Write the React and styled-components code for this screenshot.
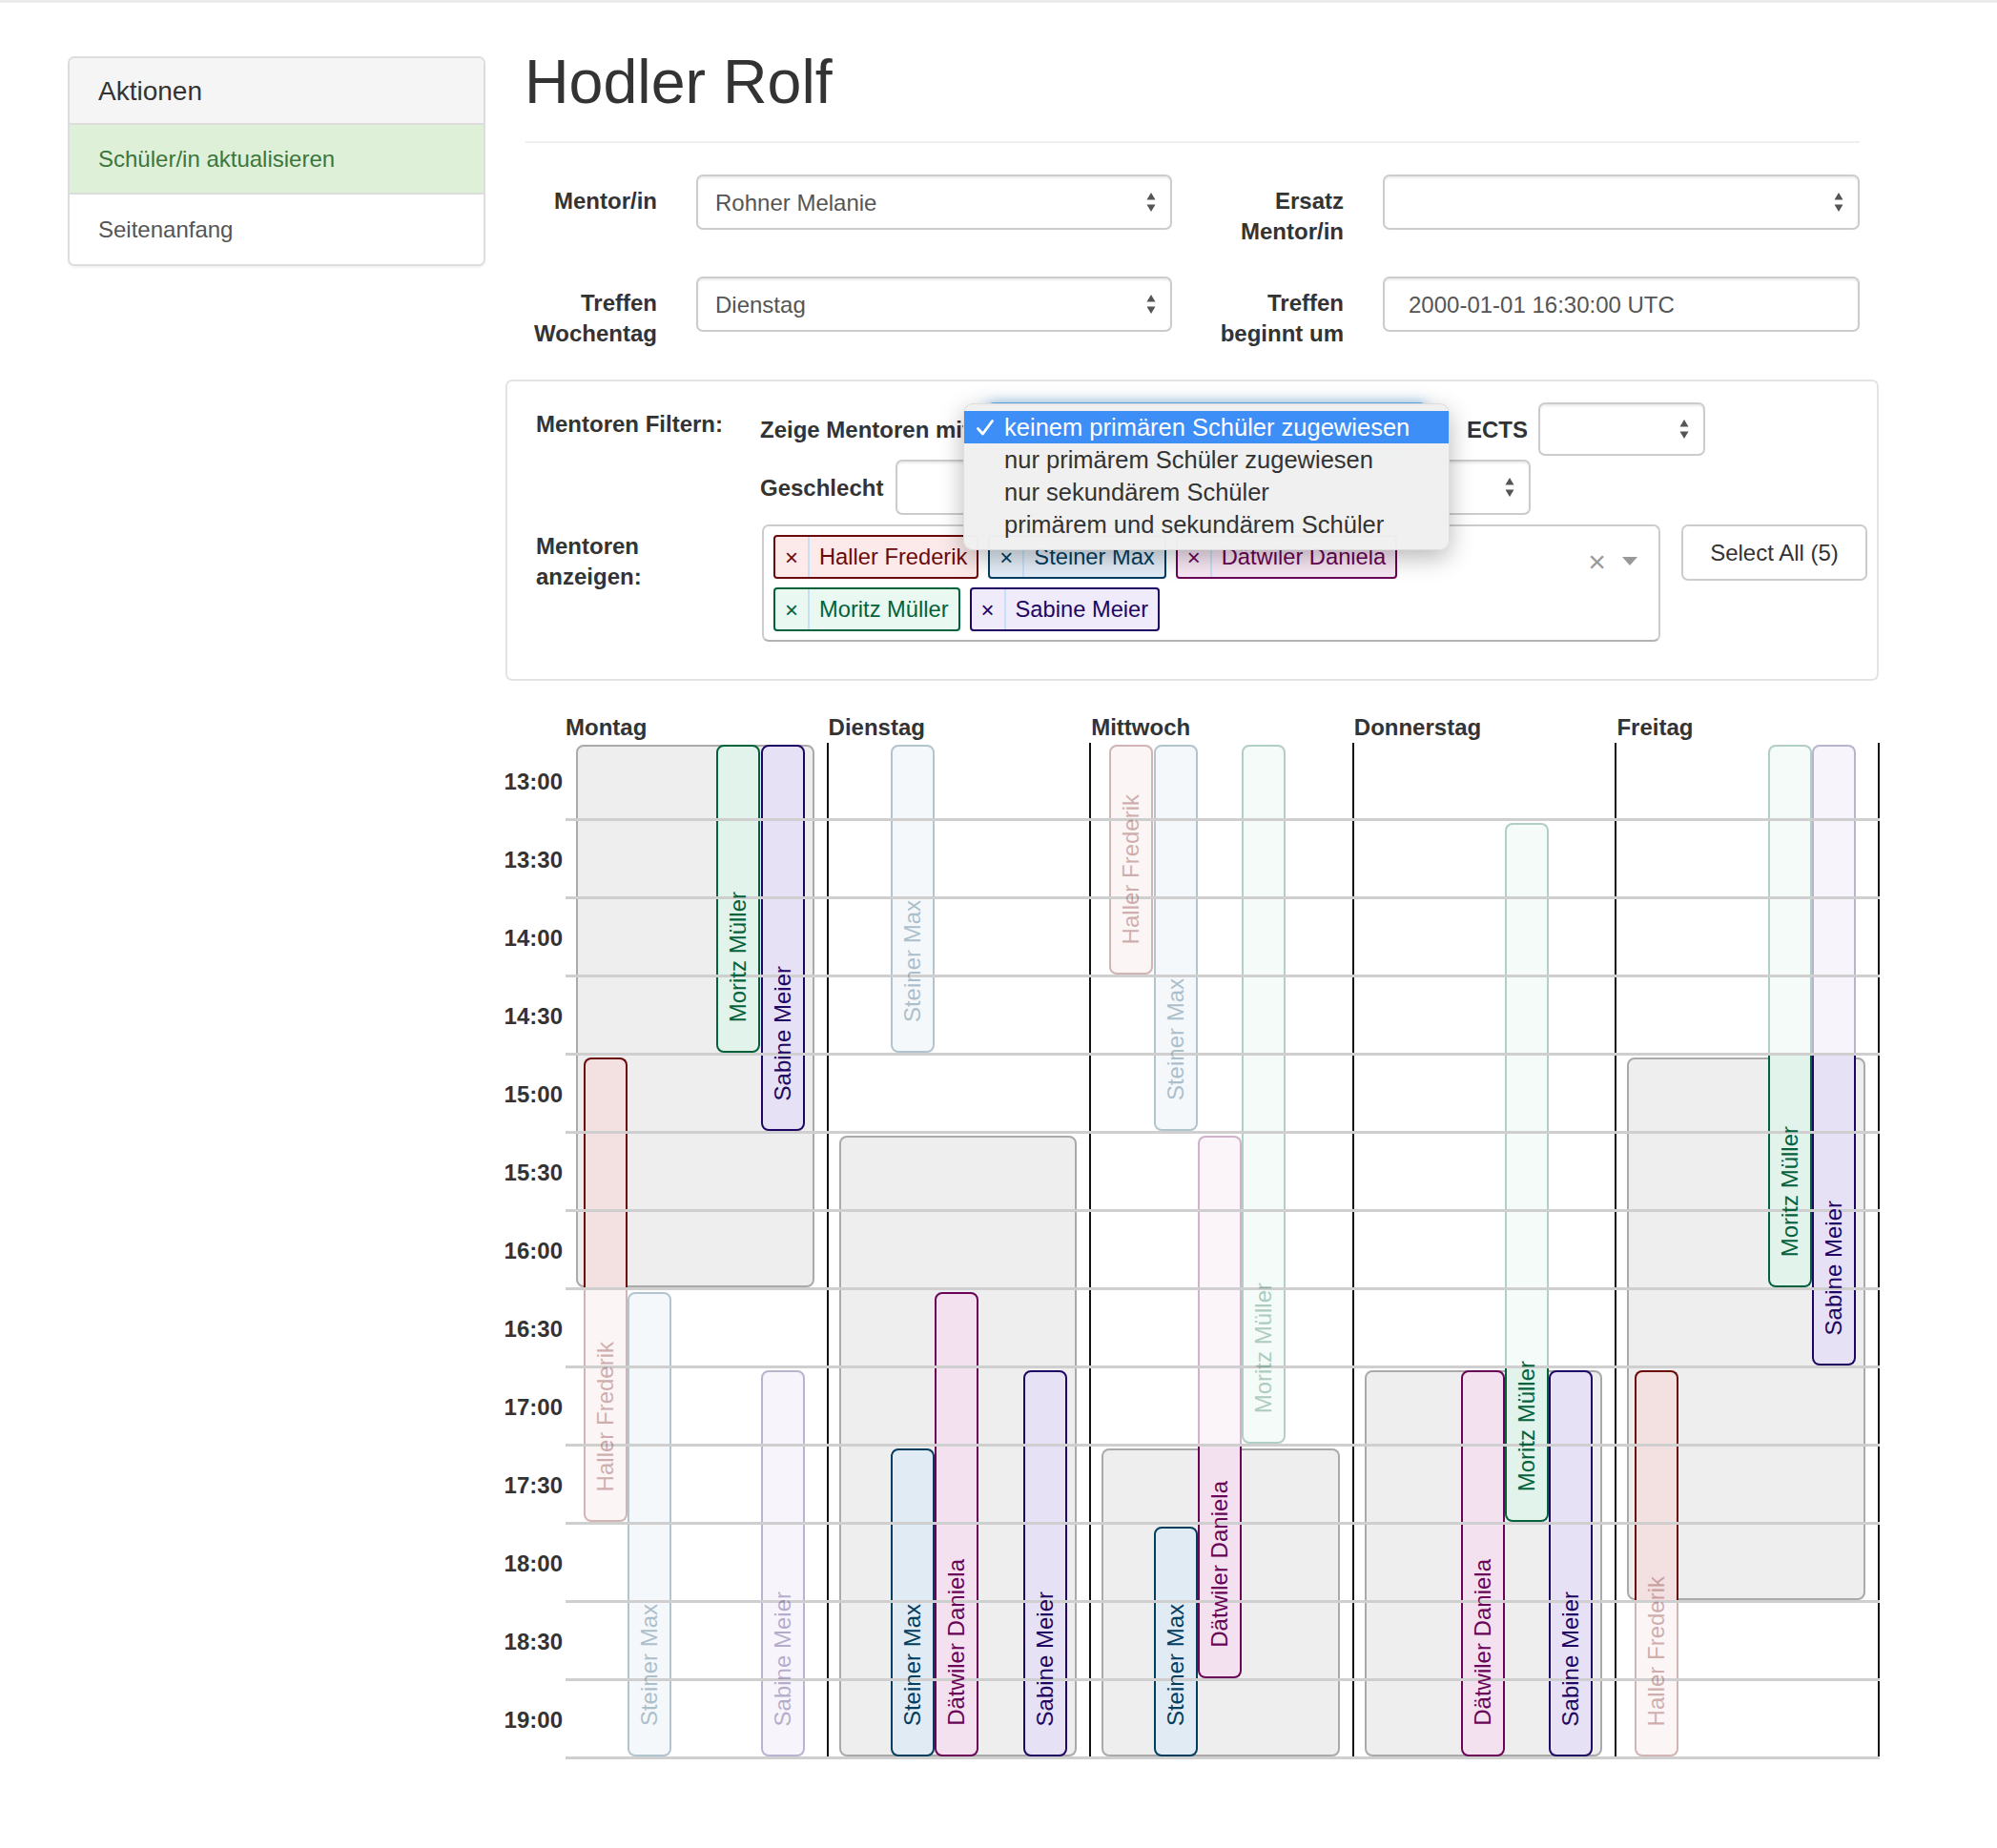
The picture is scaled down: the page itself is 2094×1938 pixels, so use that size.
import React from 'react';
import styled, { createGlobalStyle } from 'styled-components';

const GlobalStyle = createGlobalStyle`
  * { box-sizing: border-box; }
  html, body { margin: 0; padding: 0; background: #ffffff; }
  body {
    font-family: "Liberation Sans", Arial, Helvetica, sans-serif;
    font-size: 24px;
    line-height: 33px;
    color: #333333;
  }
`;

const ROW = 82;

const mentors = {
  H: { name: 'Haller Frederik', dark: '#6b0a0a', bg: '#f3e1e1', tag: '#fce9e9', slot: 0 },
  S: { name: 'Steiner Max', dark: '#033e5f', bg: '#e1ebf4', tag: '#e4eef8', slot: 1 },
  D: { name: 'Dätwiler Daniela', dark: '#6a0457', bg: '#f3e1ef', tag: '#f8e8f5', slot: 2 },
  M: { name: 'Moritz Müller', dark: '#03623b', bg: '#e1f3ea', tag: '#e9f8f0', slot: 3 },
  B: { name: 'Sabine Meier', dark: '#1e0662', bg: '#e6e1f4', tag: '#efebfb', slot: 4 },
};

const days = [
  { name: 'Montag', block: [0, 7], bars: [
    { m: 'H', segs: [[4, 7, 1], [7, 10, 0]] },
    { m: 'S', segs: [[7, 13, 0]] },
    { m: 'M', segs: [[0, 4, 1]] },
    { m: 'B', segs: [[0, 5, 1]] },
    { m: 'B', segs: [[8, 13, 0]] },
  ] },
  { name: 'Dienstag', block: [5, 13], bars: [
    { m: 'S', segs: [[0, 4, 0]] },
    { m: 'S', segs: [[9, 13, 1]] },
    { m: 'D', segs: [[7, 13, 1]] },
    { m: 'B', segs: [[8, 13, 1]] },
  ] },
  { name: 'Mittwoch', block: [9, 13], bars: [
    { m: 'H', segs: [[0, 3, 0]] },
    { m: 'S', segs: [[0, 5, 0]] },
    { m: 'D', segs: [[5, 9, 0], [9, 12, 1]] },
    { m: 'M', segs: [[0, 9, 0]] },
    { m: 'S', segs: [[10, 13, 1]] },
  ] },
  { name: 'Donnerstag', block: [8, 13], bars: [
    { m: 'M', segs: [[1, 8, 0], [8, 10, 1]] },
    { m: 'D', segs: [[8, 13, 1]] },
    { m: 'B', segs: [[8, 13, 1]] },
  ] },
  { name: 'Freitag', block: [4, 11], bars: [
    { m: 'H', segs: [[8, 11, 1], [11, 13, 0]] },
    { m: 'M', segs: [[0, 4, 0], [4, 7, 1]] },
    { m: 'B', segs: [[0, 4, 0], [4, 8, 1]] },
  ] },
];

const times = ['13:00', '13:30', '14:00', '14:30', '15:00', '15:30', '16:00', '16:30', '17:00', '17:30', '18:00', '18:30', '19:00'];

/* ---------- layout ---------- */
const TopRule = styled.div`
  height: 3px;
  background: #ececec;
`;

const Page = styled.div`
  display: flex;
  align-items: flex-start;
  padding: 0 0 90px 71px;
`;

/* ---------- sidebar ---------- */
const Sidebar = styled.nav`
  flex: 0 0 438px;
  margin-top: 56px;
  border: 2px solid #dddddd;
  border-radius: 7px;
  overflow: hidden;
  box-shadow: 0 2px 2px rgba(0, 0, 0, 0.05);
`;

const SideHeader = styled.div`
  height: 70px;
  display: flex;
  align-items: center;
  padding-left: 30px;
  background: #f5f5f5;
  border-bottom: 2px solid #dddddd;
  font-size: 28px;
  color: #333333;
`;

const SideItem = styled.a`
  display: flex;
  align-items: center;
  height: 73px;
  padding-left: 30px;
  text-decoration: none;
  background: ${p => (p.$active ? '#dff0d8' : '#ffffff')};
  color: ${p => (p.$active ? '#3c763d' : '#555555')};
  border-bottom: ${p => (p.$last ? 'none' : '2px solid #dddddd')};
`;

/* ---------- main ---------- */
const Main = styled.main`
  flex: 0 0 1441px;
  margin-left: 21px;
  margin-top: 48px;
`;

const Title = styled.h1`
  margin: 0 0 0 20px;
  font-size: 64.5px;
  line-height: 70px;
  font-weight: 500;
  color: #333333;
`;

const Rule = styled.hr`
  margin: 27px 21px 0;
  border: 0;
  height: 2px;
  background: #eeeeee;
`;

const FormGrid = styled.div`
  margin-top: 33px;
  padding: 0 21px;
  display: grid;
  grid-template-columns: 138px 499px 139px 500px;
  column-gap: 41px;
  row-gap: 31px;
  align-items: start;
`;

const FormLabel = styled.label`
  text-align: right;
  font-weight: bold;
  padding-top: 12px;
  line-height: 32px;
`;

const SelectBox = styled.div`
  position: relative;
  height: ${p => p.$h || 58}px;
  width: ${p => (p.$w ? `${p.$w}px` : 'auto')};
  flex: 0 0 auto;
  display: flex;
  align-items: center;
  justify-content: space-between;
  padding: 0 15px 0 ${p => p.$pl || 18}px;
  border: 2px solid ${p => (p.$focus ? '#66afe9' : '#cccccc')};
  border-radius: 7px;
  background: #ffffff;
  color: #555555;
  box-shadow: inset 0 2px 2px rgba(0, 0, 0, 0.075)
    ${p => (p.$focus ? ', 0 0 14px rgba(102, 175, 233, 0.7)' : '')};
`;

const Arrows = () => (
  <svg width="10" height="22" viewBox="0 0 10 22">
    <path d="M5 1 L9.5 8.5 L0.5 8.5 Z" fill="#555" />
    <path d="M0.5 13.5 L9.5 13.5 L5 21 Z" fill="#555" />
  </svg>
);

/* ---------- filter panel ---------- */
const FilterPanel = styled.section`
  margin-top: 32px;
  width: 1440px;
  border: 2px solid #e3e3e3;
  border-radius: 7px;
  padding: 22px 10px 39px 30px;
  display: grid;
  grid-template-columns: 235px 1fr;
  row-gap: 10px;
`;

const PanelLabel = styled.div`
  width: 205px;
  font-weight: bold;
  padding-top: 7px;
  line-height: 32px;
`;

const FilterRows = styled.div`
  display: flex;
  flex-direction: column;
  gap: 4px;
`;

const FilterRow = styled.div`
  display: flex;
  align-items: center;
  height: ${p => p.$h}px;
`;

const InlineLabel = styled.span`
  font-weight: bold;
  margin-right: ${p => p.$mr || 0}px;
  margin-left: ${p => p.$ml || 0}px;
  white-space: nowrap;
`;

const FocusWrap = styled.div`
  position: relative;
  width: 461px;
  height: 56px;
`;

const Dropdown = styled.ul`
  position: absolute;
  z-index: 20;
  top: 1px;
  left: -25px;
  width: 510px;
  margin: 0;
  padding: 7px 0 9px;
  list-style: none;
  background: rgba(240, 240, 240, 0.98);
  border: 1px solid rgba(0, 0, 0, 0.08);
  border-radius: 10px;
  box-shadow: 0 8px 26px rgba(0, 0, 0, 0.28);
  font-size: 25.5px;
`;

const Option = styled.li`
  position: relative;
  height: 34px;
  line-height: 34px;
  padding-left: 42px;
  white-space: nowrap;
  background: ${p => (p.$selected ? '#3d8ef7' : 'transparent')};
  color: ${p => (p.$selected ? '#ffffff' : '#333333')};
`;

const CheckMark = styled.svg`
  position: absolute;
  left: 13px;
  top: 9px;
`;

const ShowRow = styled.div`
  display: flex;
  align-items: flex-start;
  gap: 22px;
  padding-left: 2px;
`;

const MultiSelect = styled.div`
  width: 942px;
  height: 123px;
  display: flex;
  align-items: flex-start;
  justify-content: space-between;
  padding: 9px 0 0 10px;
  border: 2px solid #cccccc;
  border-bottom-color: #b3b3b3;
  border-radius: 7px;
  background: #ffffff;
`;

const TagArea = styled.div`
  width: 670px;
  display: flex;
  flex-wrap: wrap;
  gap: 9px 10px;
`;

const Tag = styled.div`
  display: flex;
  align-items: stretch;
  height: 46px;
  border: 2px solid ${p => p.$dark};
  border-radius: 4px;
  background: ${p => p.$bg};
  color: ${p => p.$dark};
`;

const TagRemove = styled.span`
  width: 36px;
  display: flex;
  align-items: center;
  justify-content: center;
  border-right: 2px solid #c6e0f7;
  font-size: 24px;
`;

const TagLabel = styled.span`
  display: flex;
  align-items: center;
  padding: 0 10px;
  font-size: 23.7px;
  white-space: nowrap;
`;

const Controls = styled.div`
  display: flex;
  align-items: center;
  gap: 17px;
  margin: 12px 22px 0 0;
  color: #999999;
`;

const ClearX = styled.span`
  font-size: 32px;
  line-height: 32px;
`;

const Button = styled.button`
  width: 195px;
  height: 59px;
  border: 2px solid #cccccc;
  border-radius: 7px;
  background: #ffffff;
  color: #333333;
  font-family: inherit;
  font-size: 24px;
`;

/* ---------- schedule ---------- */
const Schedule = styled.section`
  margin-top: 32px;
  width: 1441px;
`;

const DayHeader = styled.div`
  display: grid;
  grid-template-columns: 63px repeat(5, 1fr);
  height: 33px;
  align-items: center;
  font-weight: bold;
`;

const Board = styled.div`
  display: grid;
  grid-template-columns: 63px repeat(5, 1fr);
  grid-template-rows: repeat(13, ${ROW}px);
`;

const TimeLabel = styled.div`
  grid-column: 1;
  grid-row: ${p => p.$row};
  display: flex;
  align-items: center;
  justify-content: flex-end;
  padding: 0 3px 2px 0;
  font-weight: bold;
`;

const DayColumn = styled.div`
  grid-column: ${p => p.$col};
  grid-row: 1 / -1;
  position: relative;
  border-right: 2px solid #111111;
`;

const RowLine = styled.div`
  grid-column: 2 / -1;
  grid-row: ${p => p.$row};
  align-self: end;
  height: 3px;
  background: #cfcfcf;
  z-index: 3;
`;

const MeetingBlock = styled.div`
  position: absolute;
  left: 11px;
  right: 13px;
  background: #eeeeee;
  border: 2px solid #aaaaaa;
  border-radius: 8px;
`;

const Bar = styled.div`
  position: absolute;
  width: 46px;
  display: flex;
  flex-direction: column;
`;

const Segment = styled.div`
  flex: ${p => p.$span} 1 0;
  background: ${p => p.$bg};
  border-style: solid;
  border-color: ${p => p.$dark};
  border-width: ${p => (p.$first ? 2 : 0)}px 2px ${p => (p.$last ? 2 : 0)}px;
  border-radius: ${p => (p.$first ? '8px 8px' : '0 0')} ${p => (p.$last ? '8px 8px' : '0 0')};
  opacity: ${p => (p.$active ? 1 : 0.3)};
`;

const BarName = styled.span`
  position: absolute;
  z-index: 5;
  bottom: 32px;
  left: 50%;
  writing-mode: vertical-rl;
  transform: translateX(-50%) rotate(180deg);
  white-space: nowrap;
  font-size: 24px;
  line-height: 26px;
  color: ${p => p.$color};
  opacity: ${p => (p.$faded ? 0.3 : 1)};
`;

const blockTop = k => k * ROW + 2;
const blockHeight = (a, b) => (b - a) * ROW - 5;

function MentorBar({ bar }) {
  const m = mentors[bar.m];
  const start = bar.segs[0][0];
  const end = bar.segs[bar.segs.length - 1][1];
  const lastActive = bar.segs[bar.segs.length - 1][2] === 1;
  return (
    <Bar style={{ top: blockTop(start), height: blockHeight(start, end), left: 19 + m.slot * 46.4 }}>
      {bar.segs.map((s, i) => (
        <Segment
          key={i}
          $span={s[1] - s[0]}
          $active={s[2] === 1}
          $first={i === 0}
          $last={i === bar.segs.length - 1}
          $dark={m.dark}
          $bg={m.bg}
        />
      ))}
      <BarName $color={m.dark} $faded={!lastActive}>{m.name}</BarName>
    </Bar>
  );
}

const tagOrder = ['H', 'S', 'D', 'M', 'B'];
const options = [
  'keinem primären Schüler zugewiesen',
  'nur primärem Schüler zugewiesen',
  'nur sekundärem Schüler',
  'primärem und sekundärem Schüler',
];

export default function App() {
  return (
    <>
      <GlobalStyle />
      <TopRule />
      <Page>
        <Sidebar>
          <SideHeader>Aktionen</SideHeader>
          <SideItem $active>Schüler/in aktualisieren</SideItem>
          <SideItem $last>Seitenanfang</SideItem>
        </Sidebar>

        <Main>
          <Title>Hodler Rolf</Title>
          <Rule />
          <FormGrid>
            <FormLabel>Mentor/in</FormLabel>
            <SelectBox>
              <span>Rohner Melanie</span>
              <Arrows />
            </SelectBox>
            <FormLabel>Ersatz Mentor/in</FormLabel>
            <SelectBox>
              <span />
              <Arrows />
            </SelectBox>
            <FormLabel>Treffen Wochentag</FormLabel>
            <SelectBox>
              <span>Dienstag</span>
              <Arrows />
            </SelectBox>
            <FormLabel>Treffen beginnt um</FormLabel>
            <SelectBox $pl={25}>
              <span>2000-01-01 16:30:00 UTC</span>
            </SelectBox>
          </FormGrid>

          <FilterPanel>
            <PanelLabel>Mentoren Filtern:</PanelLabel>
            <FilterRows>
              <FilterRow $h={56}>
                <InlineLabel $mr={18}>Zeige Mentoren mit</InlineLabel>
                <FocusWrap>
                  <SelectBox $focus $h={56}>
                    <span />
                    <Arrows />
                  </SelectBox>
                  <Dropdown>
                    {options.map((o, i) => (
                      <Option key={o} $selected={i === 0}>
                        {i === 0 && (
                          <CheckMark width="18" height="17" viewBox="0 0 18 17">
                            <path d="M1.5 9.5 L6.5 15 L16.5 1.5" fill="none" stroke="#fff" strokeWidth="2.8" strokeLinecap="round" strokeLinejoin="round" />
                          </CheckMark>
                        )}
                        {o}
                      </Option>
                    ))}
                  </Dropdown>
                </FocusWrap>
                <InlineLabel $ml={42} $mr={11}>ECTS</InlineLabel>
                <SelectBox $w={175} $h={56}>
                  <span />
                  <Arrows />
                </SelectBox>
              </FilterRow>
              <FilterRow $h={58}>
                <InlineLabel $mr={13}>Geschlecht</InlineLabel>
                <SelectBox $w={666}>
                  <span />
                  <Arrows />
                </SelectBox>
              </FilterRow>
            </FilterRows>

            <PanelLabel>Mentoren anzeigen:</PanelLabel>
            <ShowRow>
              <MultiSelect>
                <TagArea>
                  {tagOrder.map(k => (
                    <Tag key={k} $dark={mentors[k].dark} $bg={mentors[k].tag}>
                      <TagRemove>×</TagRemove>
                      <TagLabel>{mentors[k].name}</TagLabel>
                    </Tag>
                  ))}
                </TagArea>
                <Controls>
                  <ClearX>×</ClearX>
                  <svg width="16" height="10" viewBox="0 0 16 10">
                    <path d="M0 0 L16 0 L8 9 Z" fill="#999" />
                  </svg>
                </Controls>
              </MultiSelect>
              <Button>Select All (5)</Button>
            </ShowRow>
          </FilterPanel>

          <Schedule>
            <DayHeader>
              <span />
              {days.map(d => (
                <span key={d.name}>{d.name}</span>
              ))}
            </DayHeader>
            <Board>
              {times.map((t, i) => (
                <TimeLabel key={t} $row={i + 1}>{t}</TimeLabel>
              ))}
              {days.map((d, di) => (
                <DayColumn key={d.name} $col={di + 2}>
                  <MeetingBlock style={{ top: blockTop(d.block[0]), height: blockHeight(d.block[0], d.block[1]) }} />
                  {d.bars.map((b, bi) => (
                    <MentorBar key={bi} bar={b} />
                  ))}
                </DayColumn>
              ))}
              {times.map((t, i) => (
                <RowLine key={`line-${t}`} $row={i + 1} />
              ))}
            </Board>
          </Schedule>
        </Main>
      </Page>
    </>
  );
}
